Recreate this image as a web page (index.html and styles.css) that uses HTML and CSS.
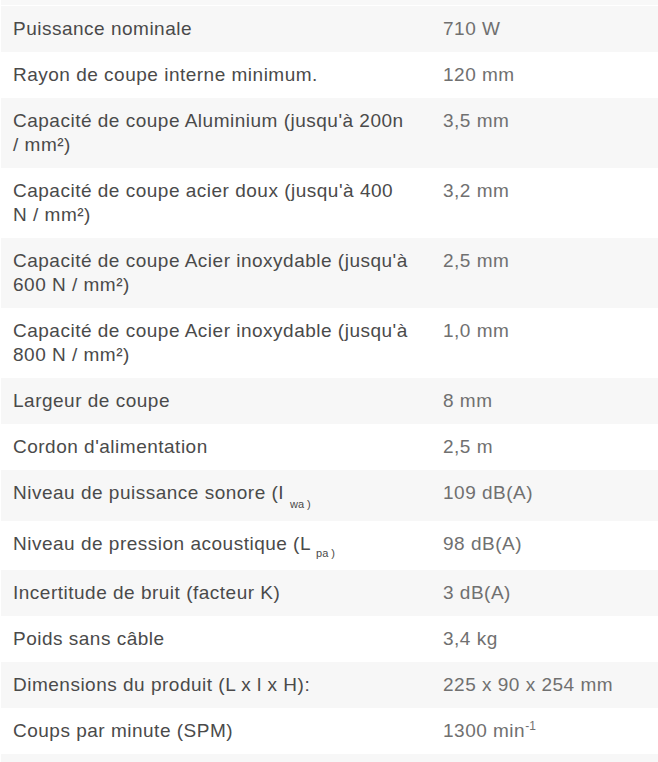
FILE: index.html
```html
<!DOCTYPE html>
<html lang="fr">
<head>
<meta charset="utf-8">
<link rel="stylesheet" href="styles.css">
</head>
<body>
<div class="wrap">
  <div class="top-band"></div>
  <table class="specs">
    <colgroup>
      <col class="col-label">
      <col class="col-value">
    </colgroup>
    <tbody>
      <tr><td class="label">Puissance nominale</td><td class="value">710 W</td></tr>
      <tr><td class="label">Rayon de coupe interne minimum.</td><td class="value">120 mm</td></tr>
      <tr><td class="label">Capacité de coupe Aluminium (jusqu'à 200n / mm²)</td><td class="value">3,5 mm</td></tr>
      <tr><td class="label">Capacité de coupe acier doux (jusqu'à 400 N / mm²)</td><td class="value">3,2 mm</td></tr>
      <tr><td class="label">Capacité de coupe Acier inoxydable (jusqu'à 600 N / mm²)</td><td class="value">2,5 mm</td></tr>
      <tr><td class="label">Capacité de coupe Acier inoxydable (jusqu'à 800 N / mm²)</td><td class="value">1,0 mm</td></tr>
      <tr><td class="label">Largeur de coupe</td><td class="value">8 mm</td></tr>
      <tr><td class="label">Cordon d'alimentation</td><td class="value">2,5 m</td></tr>
      <tr><td class="label">Niveau de puissance sonore (I <sub class="sub-deep">wa )</sub></td><td class="value">109 dB(A)</td></tr>
      <tr><td class="label">Niveau de pression acoustique (L <sub>pa )</sub></td><td class="value">98 dB(A)</td></tr>
      <tr><td class="label">Incertitude de bruit (facteur K)</td><td class="value">3 dB(A)</td></tr>
      <tr><td class="label">Poids sans câble</td><td class="value">3,4 kg</td></tr>
      <tr><td class="label">Dimensions du produit (L x l x H):</td><td class="value">225 x 90 x 254 mm</td></tr>
      <tr><td class="label">Coups par minute (SPM)</td><td class="value">1300 min<sup>-1</sup></td></tr>
      <tr><td class="label">&nbsp;</td><td class="value">&nbsp;</td></tr>
    </tbody>
  </table>
</div>
</body>
</html>
```
FILE: styles.css
```css
html, body {
  margin: 0;
  padding: 0;
  background: #ffffff;
}
body {
  font-family: "Liberation Sans", Arial, Helvetica, sans-serif;
  font-size: 19px;
  letter-spacing: 0.5px;
  line-height: 24px;
}
.wrap {
  padding-left: 1px;
}
.top-band {
  height: 5px;
  background: #f8f8f8;
  margin-bottom: 1px;
}
.specs {
  width: 100%;
  border-collapse: collapse;
  table-layout: fixed;
}
.col-label {
  width: 430px;
}
.specs tr:nth-child(odd) {
  background: #f7f7f7;
}
.specs tr:nth-child(even) {
  background: #ffffff;
}
.specs td {
  vertical-align: top;
  padding: 11px 12px;
}
.specs .label {
  color: #4a4a4a;
  padding-right: 22px;
}
.specs .value {
  color: #707070;
}
sub {
  font-size: 11px;
  letter-spacing: 0;
  line-height: 1;
  vertical-align: -7px;
}
.sub-deep {
  vertical-align: -9px;
}
sup {
  font-size: 12px;
  letter-spacing: 0;
  line-height: 0;
  vertical-align: 7px;
}
```
